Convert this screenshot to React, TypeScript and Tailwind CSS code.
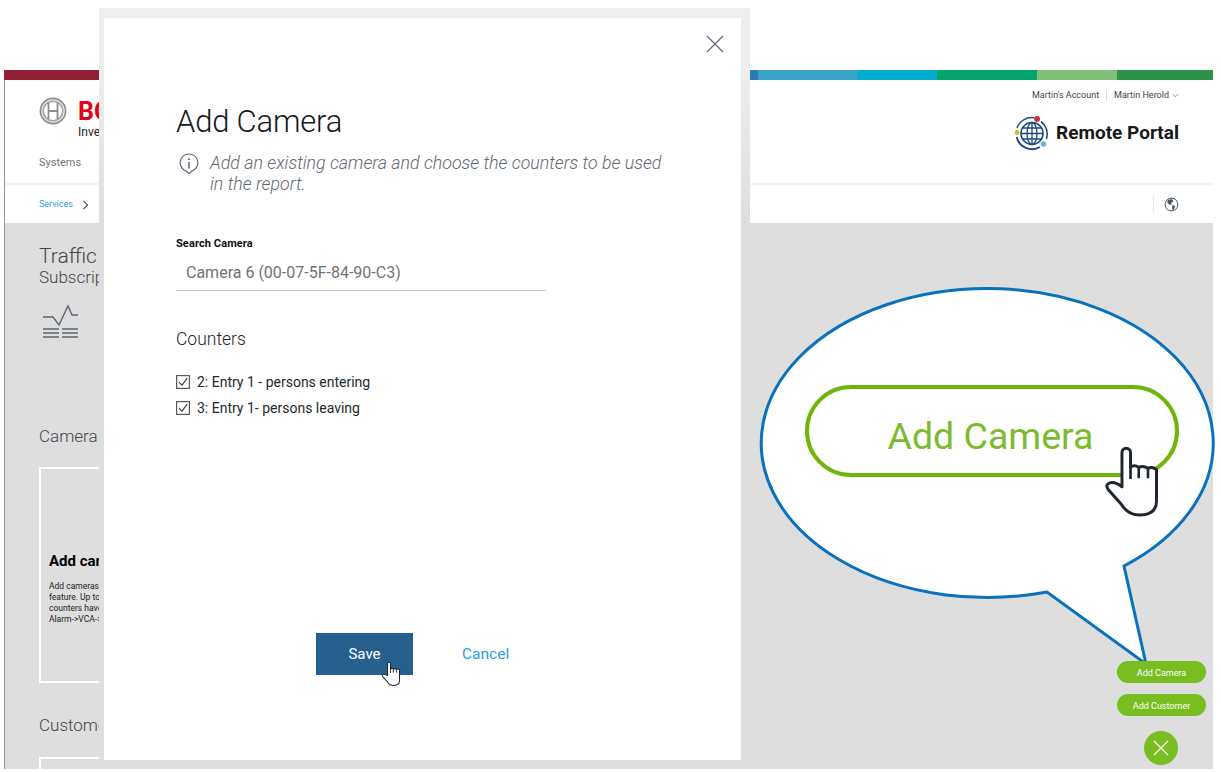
import React from "react";

const sans = "font-['Roboto','Liberation_Sans',sans-serif]";

function Hand({ className }: { className: string }) {
  return (
    <svg viewBox="40 25 175 225" className={className}>
      <path
        d="M97 152V48a13 13 0 0 1 26 0V92q12-8 25 1q14-6 28 3q13-6 26 4V195q0 43-52 43q-35 0-55-33L55 160q-10-15 5-20q15-5 37 12Z"
        fill="#fff"
        stroke="#1f2430"
        strokeWidth="9"
        strokeLinejoin="round"
      />
      <path d="M123 92V128M148 93V126M176 96V126" fill="none" stroke="#1f2430" strokeWidth="8" />
    </svg>
  );
}

function Check() {
  return (
    <svg viewBox="0 0 14 14" className="w-[14px] h-[14px] shrink-0">
      <rect x="0.6" y="0.6" width="12.8" height="12.8" fill="#fff" stroke="#55595e" strokeWidth="1.2" />
      <path d="M3 7.2 L6 10.2 L11.2 3.2" fill="none" stroke="#33373b" strokeWidth="1.1" />
    </svg>
  );
}

function BoschLogo() {
  return (
    <svg viewBox="0 0 28 28" className="w-[28px] h-[28px] shrink-0">
      <circle cx="14" cy="14" r="12.6" fill="#e9e9e9" stroke="#8d8d8d" strokeWidth="1.6" />
      <circle cx="14" cy="14" r="9.8" fill="#fff" stroke="#a5a5a5" strokeWidth="1.6" />
      <path d="M9.5 6V22M18.5 6V22M9.5 14H18.5" fill="none" stroke="#8d8d8d" strokeWidth="1.8" />
    </svg>
  );
}

function PortalLogo() {
  return (
    <svg viewBox="0 0 36 36" className="w-[36px] h-[36px] shrink-0">
      <circle cx="18" cy="18.5" r="11" fill="#fff" stroke="#1d4a7c" strokeWidth="1.6" />
      <ellipse cx="18" cy="18.5" rx="5" ry="11" fill="none" stroke="#1d4a7c" strokeWidth="1.3" />
      <path d="M18 7.5V29.5M7 18.5H29M8.6 13H27.4M8.6 24H27.4" fill="none" stroke="#1d4a7c" strokeWidth="1.3" />
      <path d="M20 2.7A15.8 15.8 0 0 0 3 13" fill="none" stroke="#1d4a7c" strokeWidth="1.4" />
      <path d="M2.7 22A15.8 15.8 0 0 0 26 32" fill="none" stroke="#1d4a7c" strokeWidth="1.8" />
      <path d="M27 6.5A15.8 15.8 0 0 1 32.5 24" fill="none" stroke="#1d4a7c" strokeWidth="1.6" />
      <circle cx="23" cy="4" r="3" fill="#c8363c" />
      <circle cx="3" cy="17.5" r="2.4" fill="#d4b72c" />
      <circle cx="29.5" cy="29" r="2.8" fill="#6cb2e2" />
    </svg>
  );
}

function TrafficIcon() {
  return (
    <svg viewBox="0 0 36 36" className="w-[36px] h-[36px] ml-[3px]">
      <path d="M1 13H11L17 21L26 2L30 11H36" fill="none" stroke="#5a6670" strokeWidth="1.4" />
      <path d="M1 25H17M20 25H36M1 29H17M20 29H36M1 33H17M20 33H36" fill="none" stroke="#5a6670" strokeWidth="1.6" />
    </svg>
  );
}

function Globe() {
  return (
    <svg viewBox="0 0 16 16" className="w-[15px] h-[15px]">
      <circle cx="8" cy="8" r="6.8" fill="#fff" stroke="#5a6670" strokeWidth="1.1" />
      <path d="M4 3.5L8.5 2L10 4.5L7.5 6.5L8.5 8L6 8.3L3.5 6ZM8.5 8.8L11.8 9.3L10.5 13.5L9 13.7Z" fill="#46525c" />
    </svg>
  );
}

export default function App() {
  return (
    <div className={`relative w-[1221px] h-[772px] bg-white overflow-hidden ${sans}`}>
      {/* Page behind the dialog */}
      <div className="ml-[4px] mt-[70px] w-[1209px] h-[699px] flex flex-col border-l border-l-[#8a96a2]">
        <div className="flex h-[10px] shrink-0 -ml-px">
          <div className="w-[746px] bg-[#8f2035]" />
          <div className="w-[8px] bg-[#2e7ab8]" />
          <div className="w-[100px] bg-[#38a3c9]" />
          <div className="w-[79px] bg-[#00acd0]" />
          <div className="w-[100px] bg-[#00a56b]" />
          <div className="w-[80px] bg-[#80bf7a]" />
          <div className="w-[96px] bg-[#2f924c]" />
        </div>

        <header className="h-[105px] shrink-0 flex justify-between border-b-2 border-b-[#f2f2f2]">
          <div className="pl-[34px] pt-[17px]">
            <div className="flex gap-[11px]">
              <BoschLogo />
              <div className="flex flex-col pt-[2px]">
                <span className="text-[25px] leading-[26px] font-bold text-[#e20015]">BOSCH</span>
                <span className="text-[12px] leading-[14px] text-[#222]">Invented for life</span>
              </div>
            </div>
            <div className="mt-[17px] text-[11px] leading-[14px] text-[#70767c]">Systems</div>
          </div>
          <div className="pr-[34px] pt-[9px] flex flex-col items-end">
            <div className="flex items-center text-[9px] leading-[12px] text-[#3c444c]">
              <span>Martin's Account</span>
              <span className="w-px h-[11px] bg-[#dcdcdc] mx-[7px]" />
              <span>Martin Herold</span>
              <svg viewBox="0 0 8 8" className="w-[7px] h-[7px] ml-[3px]">
                <path d="M1 2.5L4 5.5L7 2.5" fill="none" stroke="#5a6670" strokeWidth="0.8" />
              </svg>
            </div>
            <div className="flex items-center gap-[6px] mt-[14px]">
              <PortalLogo />
              <span className="text-[19px] leading-[20px] font-bold text-[#16181a]">Remote Portal</span>
            </div>
          </div>
        </header>

        <div className="h-[38px] shrink-0 flex items-center justify-between pl-[34px] pr-[34px]">
          <div className="flex items-center gap-[9px] pt-[1px]">
            <span className="text-[9px] text-[#2a9fdc]">Services</span>
            <svg viewBox="0 0 8 12" className="w-[7px] h-[10px]">
              <path d="M1.5 1L6.5 6L1.5 11" fill="none" stroke="#4a525a" strokeWidth="1.3" />
            </svg>
          </div>
          <div className="flex items-center">
            <span className="w-px h-[18px] bg-[#e2e2e2] mr-[10px]" />
            <Globe />
          </div>
        </div>

        <main className="flex-1 min-h-0 overflow-hidden bg-[#dedede] pl-[34px] pt-[21px] text-[#40464c]">
          <div className="text-[21px] leading-[24px] font-light">Traffic insights</div>
          <div className="text-[17px] leading-[19px] font-light">Subscription</div>
          <div className="mt-[17px]">
            <TrafficIcon />
          </div>
          <div className="mt-[86px] text-[17px] leading-[20px] font-light">Camera</div>
          <section className="mt-[21px] h-[216px] w-[300px] border-2 border-white pl-[8px] pt-[27px] flex flex-col justify-center text-black">
            <div className="text-[15px] leading-[18px] font-bold">Add camera</div>
            <div className="mt-[11px] text-[8.5px] leading-[11px] text-[#222]">
              <div>Add cameras</div>
              <div>feature. Up to</div>
              <div>counters have</div>
              <div>Alarm-&gt;VCA-&gt;</div>
            </div>
          </section>
          <div className="mt-[32px] text-[17px] leading-[20px] font-light">Customer</div>
          <section className="mt-[22px] h-[100px] w-[300px] border-2 border-white" />
        </main>
      </div>

      {/* Dialog */}
      <div className="absolute left-[99px] top-[8px] w-[651px] h-[761px] pl-[5px] pt-[10px] pr-[9px] pb-[9px] bg-linear-to-b from-[#eeeeee] from-[8%] to-[#dedede] to-[28%]">
        <div className="relative h-full bg-white pl-[72px] pt-[84px] pb-[85px] flex flex-col">
          <svg viewBox="0 0 18 18" className="absolute right-[17px] top-[17px] w-[18px] h-[18px]">
            <path d="M1 1L17 17M17 1L1 17" fill="none" stroke="#5f6b76" strokeWidth="1.2" />
          </svg>
          <h1 className="text-[31px] leading-[40px] font-light tracking-[-0.2px] text-[#14181c]">Add Camera</h1>
          <div className="mt-[10px] flex">
            <svg viewBox="0 0 20 24" className="w-[20px] h-[24px] ml-[3px] mt-[1px] shrink-0">
              <path d="M10 20.5L7 18A8.8 8.8 0 1 1 13 18Z" fill="none" stroke="#5a6670" strokeWidth="1.1" strokeLinejoin="round" />
              <path d="M10 9V15.5" stroke="#5a6670" strokeWidth="1.5" />
              <circle cx="10" cy="6.3" r="1" fill="#5a6670" />
            </svg>
            <p className="ml-[11px] w-[462px] text-[17.8px] leading-[21px] italic font-light text-[#5f6870]">
              Add an existing camera and choose the counters to be used in the report.
            </p>
          </div>
          <label className="mt-[43px] text-[11px] leading-[14px] font-bold tracking-[0.1px] text-[#111]">Search Camera</label>
          <div className="w-[370px] h-[40px] flex items-center pl-[10px] pt-[5px] border-b border-b-[#c4c4c4] text-[16px] text-[#6f7478]">
            Camera 6 (00-07-5F-84-90-C3)
          </div>
          <div className="mt-[38px] text-[17.5px] leading-[20px] font-light text-[#20262c]">Counters</div>
          <div className="mt-[26px] flex flex-col gap-[12px] text-[14px] leading-[14px] text-[#23282d]">
            <div className="flex items-center gap-[7px]">
              <Check />
              <span>2: Entry 1 - persons entering</span>
            </div>
            <div className="flex items-center gap-[7px]">
              <Check />
              <span>3: Entry 1- persons leaving</span>
            </div>
          </div>
          <div className="mt-auto ml-[140px] flex items-center gap-[49px]">
            <button className="w-[97px] h-[42px] pt-[1px] bg-[#27608f] text-white text-[15px]">Save</button>
            <button className="pt-[2px] text-[15.5px] text-[#2a9fdc]">Cancel</button>
          </div>
        </div>
      </div>
      <Hand className="absolute left-[381px] top-[661px] w-[20px] h-[26px]" />

      {/* Callout */}
      <svg viewBox="0 0 1221 772" className="absolute inset-0 w-[1221px] h-[772px] pointer-events-none">
        <path
          d="M1047 592A226 154.5 0 1 1 1124 566L1146 664Z"
          fill="#fff"
          stroke="#0a71bc"
          strokeWidth="3"
        />
      </svg>
      <div className="absolute left-[805px] top-[385px] w-[374px] h-[92px] rounded-[46px] border-[4px] border-[#70b50c] flex items-center justify-center pr-[3px] pt-[10px] text-[37.5px] text-[#7dbb2e]">
        Add Camera
      </div>
      <Hand className="absolute left-[1103px] top-[445px] w-[58px] h-[74px]" />

      {/* Floating actions */}
      <div className="absolute left-[1117px] top-[661px] w-[89px] flex flex-col items-center gap-[11px]">
        <div className="w-full h-[22px] rounded-full bg-[#78be20] text-white text-[9px] pt-[3px] flex items-center justify-center">Add Camera</div>
        <div className="w-full h-[22px] rounded-full bg-[#78be20] text-white text-[9px] pt-[3px] flex items-center justify-center">Add Customer</div>
        <div className="w-[34px] h-[34px] mt-[4px] -ml-px rounded-full bg-[#78be20] flex items-center justify-center">
          <svg viewBox="0 0 16 16" className="w-[16px] h-[16px]">
            <path d="M1 1L15 15M15 1L1 15" fill="none" stroke="#fff" strokeWidth="1.1" />
          </svg>
        </div>
      </div>
    </div>
  );
}
